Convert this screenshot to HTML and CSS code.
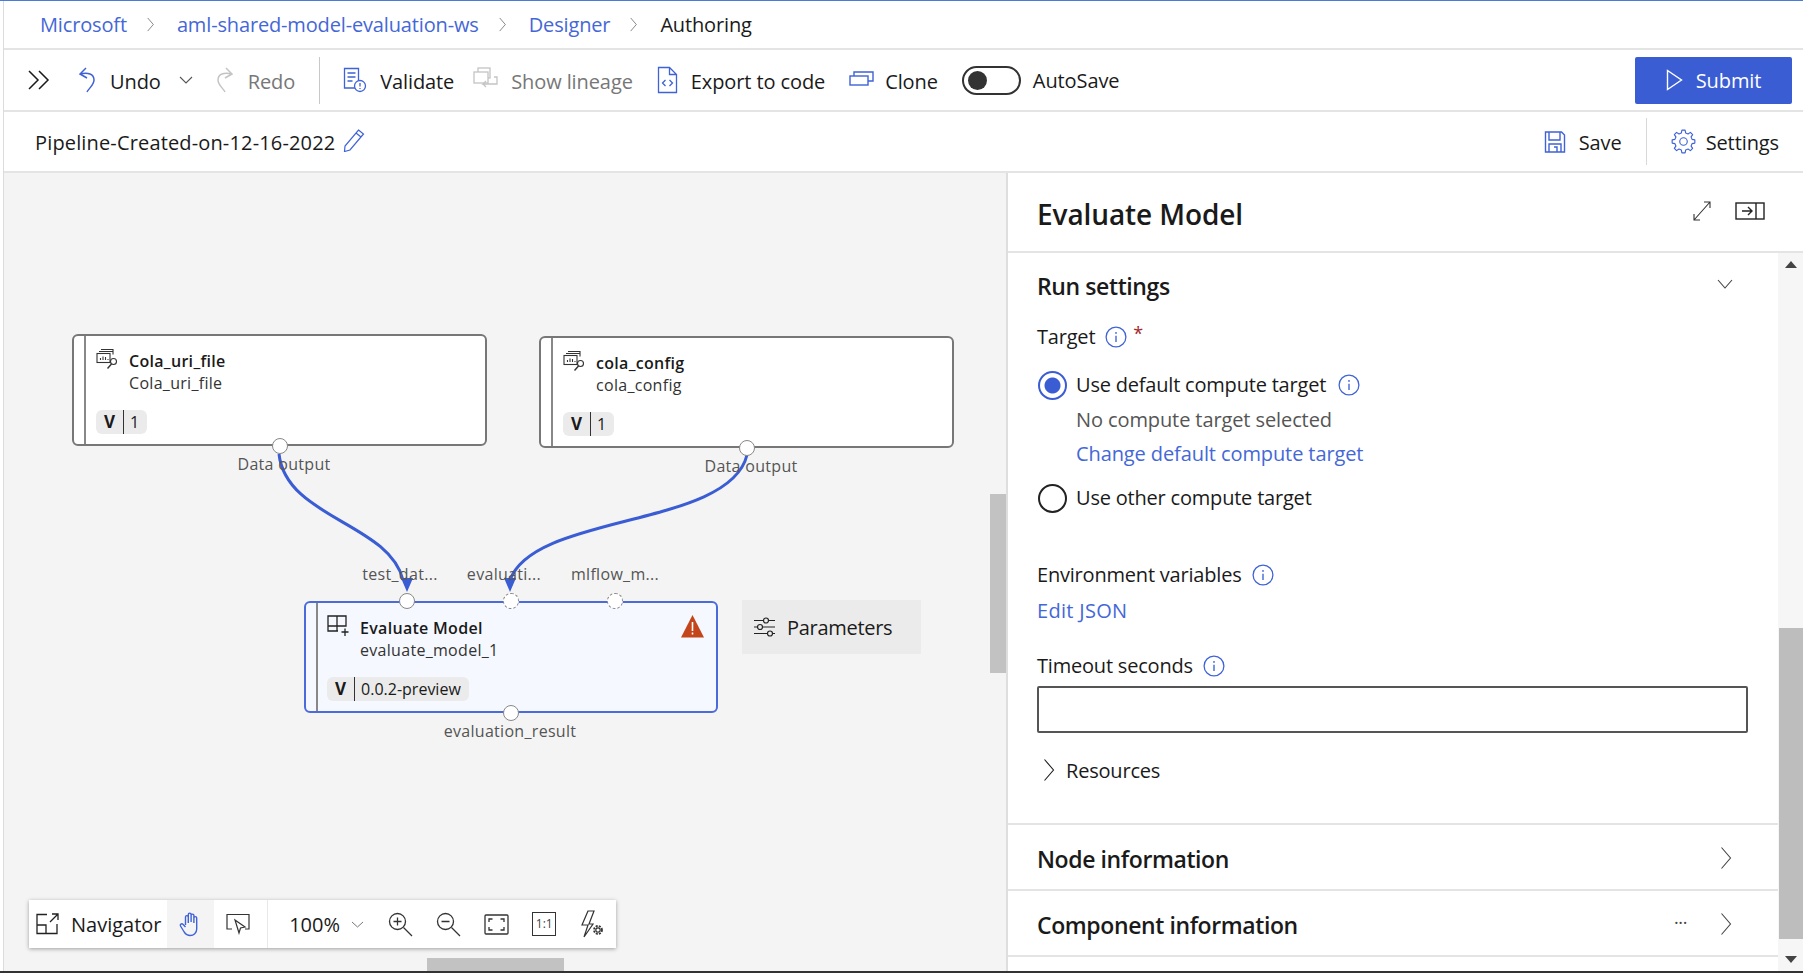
FILE: index.html
```html
<!DOCTYPE html>
<html lang="en">
  <head>
    <meta charset="UTF-8" />
    <title>Authoring - Designer</title>
    <link rel="stylesheet" href="styles.css">
  </head>
  <body>
    <svg class="defs" width="0" height="0">
      <symbol id="info" viewBox="0 0 24 24">
        <circle cx="12" cy="12" r="10.8" fill="none" stroke="currentColor" stroke-width="1.4" />
        <path d="M12 10.5v7" fill="none" stroke="currentColor" stroke-width="1.5" />
        <circle cx="12" cy="7.5" r="1" fill="currentColor" />
      </symbol>
      <symbol id="dataset" viewBox="0 0 22 22">
        <g fill="none" stroke="#333" stroke-width="1.1">
          <path d="M5 1.5h12v2M3 3.5h14v3" />
          <rect x="1" y="5.5" width="13" height="9" fill="#fff" />
          <path d="M4.500 12v-2M7 12V8.500M9.500 12v-3M12 12v-1" />
          <circle cx="17.500" cy="13.500" r="3" />
          <path d="M15.500 16l-4 4.500" stroke-width="1.400" />
        </g>
      </symbol>
      <symbol id="chev-right" viewBox="0 0 12 24">
        <path d="M1.500 1.500L10.500 12L1.500 22.500" fill="none" stroke="currentColor" stroke-width="1.100" />
      </symbol>
    </svg>

    <div class="app">
      <nav class="crumbs">
        <a class="crumb-link">Microsoft</a>
        <svg class="crumb-sep"><use href="#chev-right" /></svg>
        <a class="crumb-link">aml-shared-model-evaluation-ws</a>
        <svg class="crumb-sep"><use href="#chev-right" /></svg>
        <a class="crumb-link">Designer</a>
        <svg class="crumb-sep"><use href="#chev-right" /></svg>
        <span>Authoring</span>
      </nav>

      <div class="toolbar">
        <svg class="expand-icon" width="22" height="22" viewBox="0 0 22 22" fill="none" stroke="#1a1a1a" stroke-width="1.500">
          <path d="M1 2l9 9-9 9M11 2l9 9-9 9" />
        </svg>
        <div class="tool tool-undo">
          <svg width="20" height="28" viewBox="0 0 20 28" fill="none" stroke="#3f62d6" stroke-width="1.500">
            <path d="M9 2L3 8l7 4M3 8c8-2 14 0 14 6 0 5-5 8-7 12" />
          </svg>
          <span>Undo</span>
        </div>
        <svg class="caret" width="14" height="8" viewBox="0 0 14 8" fill="none" stroke="#555" stroke-width="1.100">
          <path d="M1 1l6 6 6-6" />
        </svg>
        <div class="tool tool-off tool-redo">
          <svg width="20" height="28" viewBox="0 0 20 28" fill="none" stroke="#c4c4c4" stroke-width="1.500">
            <path d="M11 2l6 6-7 4M17 8C9 6 3 8 3 14c0 5 5 8 7 12" />
          </svg>
          <span>Redo</span>
        </div>
        <div class="tool-divider"></div>
        <div class="tool">
          <svg width="24" height="26" viewBox="0 0 24 26" fill="none" stroke="#3f62d6" stroke-width="1.300">
            <path d="M13 21H1.500V1.500h14V13" />
            <path d="M4.500 6h8M4.500 10h8M4.500 14h5" />
            <circle cx="17" cy="19" r="5.500" fill="#fff" />
            <path d="M17 16v3.500M17 21v1" />
          </svg>
          <span>Validate</span>
        </div>
        <div class="tool tool-off tool-lineage">
          <svg width="25" height="26" viewBox="0 0 25 26" fill="none" stroke="#c4c4c4" stroke-width="1.300">
            <rect x="5" y="1" width="12" height="10" />
            <rect x="1" y="5" width="14" height="11" fill="#fff" />
            <path d="M21 10h3v7H10l3-3M10 17l3 3" />
          </svg>
          <span>Show lineage</span>
        </div>
        <div class="tool">
          <svg width="21" height="28" viewBox="0 0 21 28" fill="none" stroke="#3f62d6" stroke-width="1.300">
            <path d="M1.500 1.500h11l7 7v18h-18zM12.500 1.500v7h7" />
            <path d="M8.500 14l-3 3 3 3M12.500 14l3 3-3 3" />
          </svg>
          <span>Export to code</span>
        </div>
        <div class="tool tool-clone">
          <svg width="25" height="20" viewBox="0 0 25 20" fill="none" stroke="#3f62d6" stroke-width="1.400">
            <path d="M5 6V2h19v9h-5" />
            <rect x="1" y="6" width="18" height="9" fill="#fff" />
          </svg>
          <span>Clone</span>
        </div>
        <div class="toggle-wrap">
          <div class="toggle"><div class="toggle-knob"></div></div>
          <span>AutoSave</span>
        </div>
        <button class="submit-btn">
          <svg width="17" height="22" viewBox="0 0 17 22" fill="none" stroke="#fff" stroke-width="1.400">
            <path d="M1.500 1.500v19L15.500 11z" />
          </svg>
          Submit
        </button>
      </div>

      <div class="title-bar">
        <span class="pipeline-name">Pipeline-Created-on-12-16-2022</span>
        <svg class="pencil" width="22" height="24" viewBox="0 0 22 24" fill="none" stroke="#3f62d6" stroke-width="1.200">
          <path d="M15.500 2l5 4L7 22l-5.500 1.500L2 18zM13 5l5 4" />
        </svg>
        <div class="title-actions">
          <div class="tool">
            <svg width="22" height="24" viewBox="0 0 22 24" fill="none" stroke="#3f62d6" stroke-width="1.400">
              <path d="M1.500 2h16l3 3v17h-19zM5 2v8h11V2M5 22v-8h12v8M10 17h3v5" />
            </svg>
            <span>Save</span>
          </div>
          <div class="title-divider"></div>
          <div class="tool tool-settings">
            <svg width="25" height="25" viewBox="0 0 24 24" fill="none" stroke="#3f62d6" stroke-width="1.100" stroke-linejoin="round">
              <polygon transform="translate(12 12)" points="1.530,-10.890 2.060,-8.250 4.380,-7.290 6.620,-8.780 8.780,-6.620 7.290,-4.380 8.250,-2.060 10.890,-1.530 10.890,1.530 8.250,2.060 7.290,4.380 8.780,6.620 6.620,8.780 4.380,7.290 2.060,8.250 1.530,10.890 -1.530,10.890 -2.060,8.250 -4.380,7.290 -6.620,8.780 -8.780,6.620 -7.290,4.380 -8.250,2.060 -10.890,1.530 -10.890,-1.530 -8.250,-2.060 -7.290,-4.380 -8.780,-6.620 -6.620,-8.780 -4.380,-7.290 -2.060,-8.250 -1.530,-10.890" />
              <circle cx="12" cy="12" r="3.600" />
            </svg>
            <span>Settings</span>
          </div>
        </div>
      </div>

      <main class="main">
        <section class="canvas">
          <svg class="edges" width="1002" height="798" viewBox="0 0 1002 798" fill="none" stroke="#3a5dd3" stroke-width="3">
            <path d="M275 281C282 345 385 350 399 407" />
            <path d="M743 282C725 355 530 340 506 407" />
            <path d="M403 419l-6-14h12zM506 419l-6-14h12z" fill="#3a5dd3" stroke="none" />
          </svg>

          <div class="node node-cola">
            <div class="node-head">
              <svg class="node-icon" width="22" height="22"><use href="#dataset" /></svg>
              <div>
                <div class="node-title">Cola_uri_file</div>
                <div class="node-sub">Cola_uri_file</div>
              </div>
            </div>
            <div class="version"><b>V</b><span>1</span></div>
            <i class="port port-bottom"></i>
          </div>
          <div class="port-label label-cola">Data output</div>

          <div class="node node-config">
            <div class="node-head">
              <svg class="node-icon" width="22" height="22"><use href="#dataset" /></svg>
              <div>
                <div class="node-title">cola_config</div>
                <div class="node-sub">cola_config</div>
              </div>
            </div>
            <div class="version"><b>V</b><span>1</span></div>
            <i class="port port-bottom"></i>
          </div>
          <div class="port-label label-config">Data output</div>

          <div class="port-label label-test">test_dat...</div>
          <div class="port-label label-eval">evaluati...</div>
          <div class="port-label label-mlflow">mlflow_m...</div>

          <div class="node node-evaluate">
            <i class="port port-top port-a"></i>
            <i class="port port-top port-b port-dashed"></i>
            <i class="port port-top port-c port-dashed"></i>
            <div class="node-head">
              <svg class="node-icon" width="22" height="22" viewBox="0 0 22 22" fill="none" stroke="#222" stroke-width="1.300">
                <path d="M11 16H1V1h18v10H1M10 1v15M14.500 17h7M18 13.500v7.500" />
              </svg>
              <div>
                <div class="node-title">Evaluate Model</div>
                <div class="node-sub">evaluate_model_1</div>
              </div>
              <svg class="warn-icon" width="23" height="23" viewBox="0 0 23 23">
                <path d="M11.500 0L23 22.500H0z" fill="#c4451c" />
                <path d="M11.500 7v9M11.500 17.500v2" stroke="#fff" stroke-width="1.600" />
              </svg>
            </div>
            <div class="version"><b>V</b><span>0.0.2-preview</span></div>
            <i class="port port-bottom"></i>
          </div>
          <div class="port-label label-result">evaluation_result</div>

          <div class="params-box">
            <svg width="23" height="20" viewBox="0 0 23 20" fill="none" stroke="#222" stroke-width="1.200">
              <path d="M1 3.500h9M16 3.500h6M1 10h3M10 10h12M1 16.500h13M20 16.500h2" />
              <circle cx="13" cy="3.500" r="2.500" />
              <circle cx="7" cy="10" r="2.500" />
              <circle cx="17" cy="16.500" r="2.500" />
            </svg>
            <span>Parameters</span>
          </div>

          <div class="navigator">
            <div class="nav-name">
              <svg width="23" height="22" viewBox="0 0 23 22" fill="none" stroke="#222" stroke-width="1.300">
                <path d="M11 1.500H1v19h20V11M1 12h9v8.500M14 9l8-8M16 1h6v6" />
              </svg>
              <span>Navigator</span>
            </div>
            <div class="nav-btn nav-hand">
              <svg width="24" height="26" viewBox="0 0 24 26" fill="none" stroke="#3f62d6" stroke-width="1.400">
                <path d="M7.500 14V6a1.400 1.400 0 0 1 2.800 0v6M10.300 11V3.500a1.400 1.400 0 0 1 2.800 0V11M13.100 11V4.500a1.400 1.400 0 0 1 2.800 0V12M15.900 12V7a1.400 1.400 0 0 1 2.800 0v11c0 4-3 6.500-6.500 6.500-3 0-4.500-1.200-6-3.500l-3.700-6c-.9-1.500 1.200-3 2.400-1.800l2.600 2.800" />
              </svg>
            </div>
            <div class="nav-btn nav-select">
              <svg width="24" height="22" viewBox="0 0 24 22" fill="none" stroke="#333" stroke-width="1.200">
                <path d="M6 16H1V1.500h22V16h-4" />
                <path d="M9 7l10 7-4.500 1-1.500 5z" fill="#fff" />
              </svg>
            </div>
            <div class="nav-zoom">
              <span>100%</span>
              <svg width="13" height="7" viewBox="0 0 13 7" fill="none" stroke="#777" stroke-width="1">
                <path d="M1 1l5.500 5L12 1" />
              </svg>
            </div>
            <div class="nav-btn">
              <svg width="25" height="25" viewBox="0 0 25 25" fill="none" stroke="#333" stroke-width="1.300">
                <circle cx="9.500" cy="9.500" r="8" />
                <path d="M15.500 15.500l8.500 8.500M5.500 9.500h8M9.500 5.500v8" />
              </svg>
            </div>
            <div class="nav-btn">
              <svg width="25" height="25" viewBox="0 0 25 25" fill="none" stroke="#333" stroke-width="1.300">
                <circle cx="9.500" cy="9.500" r="8" />
                <path d="M15.500 15.500l8.500 8.500M5.500 9.500h8" />
              </svg>
            </div>
            <div class="nav-btn">
              <svg width="25" height="21" viewBox="0 0 25 21" fill="none" stroke="#333" stroke-width="1.300">
                <rect x="1" y="1" width="23" height="19" rx="1" />
                <path d="M5 8V5h3.500M20 8V5h-3.500M5 13v3h3.500M20 13v3h-3.500" />
              </svg>
            </div>
            <div class="nav-btn"><span class="one-one">1:1</span></div>
            <div class="nav-btn">
              <svg width="24" height="28" viewBox="0 0 24 28" fill="none" stroke="#333" stroke-width="1.200">
                <path d="M8 1L2 15h6L4 27l9-13H9l5-13z" />
                <circle cx="18" cy="20" r="2.200" />
                <circle cx="18" cy="20" r="4" stroke-dasharray="2 1.200" stroke-width="1.800" />
              </svg>
            </div>
          </div>

          <div class="hscroll-thumb"></div>
          <div class="vscroll-thumb"></div>
        </section>

        <aside class="panel">
          <header class="panel-head">
            <h1>Evaluate Model</h1>
            <svg width="18" height="20" viewBox="0 0 18 20" fill="none" stroke="#333" stroke-width="1.100">
              <path d="M1 19L17 1M11 1h6v6M1 13v6h6" />
            </svg>
            <svg class="dock-icon" width="30" height="18" viewBox="0 0 30 18" fill="none" stroke="#222" stroke-width="1.400">
              <rect x="1" y="1" width="28" height="16" />
              <path d="M21 1v16M7 9h10M13 5l4 4-4 4" />
            </svg>
          </header>

          <div class="panel-body">
            <div class="panel-scroll">
              <div class="section-head section-run">
                <span>Run settings</span>
                <svg width="16" height="10" viewBox="0 0 16 10" fill="none" stroke="#444" stroke-width="1.100">
                  <path d="M1 1l7 8 7-8" />
                </svg>
              </div>
              <div class="section-pad">
                <div class="field-label">Target <svg class="info"><use href="#info" /></svg><span class="req">*</span></div>
                <div class="radio-row radio-first"><i class="radio radio-on"></i>Use default compute target<svg class="info info-tight"><use href="#info" /></svg></div>
                <div class="radio-note">No compute target selected</div>
                <div class="radio-note"><a class="link">Change default compute target</a></div>
                <div class="radio-row radio-second"><i class="radio"></i>Use other compute target</div>
                <div class="field-label label-env">Environment variables <svg class="info"><use href="#info" /></svg></div>
                <div class="field-line"><a class="link link-json">Edit JSON</a></div>
                <div class="field-label label-timeout">Timeout seconds <svg class="info"><use href="#info" /></svg></div>
                <input class="text-input" type="text" />
                <div class="resources">
                  <svg width="14" height="24" viewBox="0 0 12 24"><use href="#chev-right" /></svg>
                  <span>Resources</span>
                </div>
              </div>
              <div class="section-head section-closed">
                <span>Node information</span>
                <svg class="row-chev" width="12" height="24"><use href="#chev-right" /></svg>
              </div>
              <div class="section-head section-closed">
                <span>Component information</span>
                <span class="dots">···</span>
                <svg class="row-chev" width="12" height="24"><use href="#chev-right" /></svg>
              </div>
            </div>
            <div class="scrollbar">
              <i class="arrow-up"></i>
              <div class="scrollbar-thumb"></div>
              <i class="arrow-down"></i>
            </div>
          </div>
        </aside>
      </main>
    </div>
  </body>
</html>
```

FILE: styles.css
```css
:root {
  --blue: #3a5dd3;
  --link: #4467d8;
  --line: #e4e4e4;
  --canvas: #f4f4f4;
  --text: #1a1a1a;
}

* {
  margin: 0;
  padding: 0;
  box-sizing: border-box;
}

html,
body {
  height: 973px;
  overflow: hidden;
}

body {
  font-family: "Open Sans", "Noto Sans", sans-serif;
  color: var(--text);
  background: #fff;
  border-top: 1px solid #4a7bd8;
  border-bottom: 2px solid #333;
}

.defs {
  position: absolute;
}

.app {
  margin-left: 3px;
  height: 100%;
  border-left: 1px solid #dcdcdc;
  display: flex;
  flex-direction: column;
}

.crumbs {
  height: 49px;
  flex: none;
  border-bottom: 2px solid var(--line);
  display: flex;
  align-items: center;
  padding-left: 36px;
  font-size: 20px;
  letter-spacing: -0.15px;
}

.crumb-link {
  color: var(--link);
}

.crumb-sep {
  width: 9px;
  height: 15px;
  margin: 0 22px 0 19px;
  color: #555;
}

.toolbar {
  height: 62px;
  flex: none;
  border-bottom: 2px solid var(--line);
  display: flex;
  align-items: center;
  gap: 24px;
  padding: 0 11px 0 24px;
  font-size: 20px;
  letter-spacing: -0.1px;
}

.tool {
  display: flex;
  align-items: center;
  gap: 13px;
  white-space: nowrap;
}

.tool span {
  padding-top: 2px;
}

.tool-off {
  color: #777;
}

.tool-undo {
  margin-left: 3px;
}

.caret {
  margin-left: -6px;
}

.tool-redo {
  margin-left: -2px;
}

.tool-lineage {
  margin-left: -5px;
}

.tool-clone {
  gap: 11px;
}

.tool-settings {
  gap: 10px;
}

.tool-divider {
  width: 1px;
  height: 47px;
  margin-right: -1px;
  background: #c8c8c8;
}

.toggle-wrap {
  display: flex;
  align-items: center;
  gap: 12px;
}

.toggle {
  width: 59px;
  height: 29px;
  border: 2px solid #333;
  border-radius: 15px;
  padding: 3px 4px;
}

.toggle-knob {
  width: 19px;
  height: 19px;
  border-radius: 50%;
  background: #333;
}

.submit-btn {
  margin-left: auto;
  width: 157px;
  height: 47px;
  background: var(--blue);
  color: #fff;
  border: none;
  border-radius: 2px;
  font: inherit;
  letter-spacing: inherit;
  display: flex;
  align-items: center;
  justify-content: center;
  gap: 13px;
}

.title-bar {
  height: 61px;
  flex: none;
  border-bottom: 2px solid var(--line);
  display: flex;
  align-items: center;
  padding: 0 24px 0 31px;
  font-size: 20px;
  letter-spacing: -0.1px;
}

.pipeline-name {
  font-weight: 500;
  letter-spacing: 0.15px;
  padding-top: 2px;
}

.pencil {
  margin: -3px 0 0 8px;
}

.title-actions {
  margin-left: auto;
  display: flex;
  align-items: center;
  gap: 24px;
}

.title-divider {
  width: 1px;
  height: 47px;
  background: #d8d8d8;
}

.main {
  flex: 1;
  display: flex;
  min-height: 0;
}

.canvas {
  width: 1002px;
  flex: none;
  position: relative;
  background: var(--canvas);
  overflow: hidden;
  letter-spacing: 0.3px;
}

.edges {
  position: absolute;
  left: 0;
  top: 0;
}

.node {
  position: absolute;
  width: 415px;
  height: 112px;
  background: #fff;
  border: 2px solid #777;
  border-radius: 6px;
  padding: 11px 0 0 22px;
}

.node::before {
  content: "";
  position: absolute;
  left: 10px;
  top: 0;
  bottom: 0;
  border-left: 2px solid #888;
}

.node-cola {
  left: 68px;
  top: 161px;
}

.node-config {
  left: 535px;
  top: 163px;
}

.node-evaluate {
  left: 300px;
  top: 428px;
  width: 414px;
  padding-left: 21px;
  background: #f5f8fe;
  border-color: #4a6bd9;
}

.node-head {
  display: flex;
  align-items: flex-start;
  gap: 11px;
  height: 63px;
  position: relative;
}

.node-icon {
  flex: none;
  margin-top: 1px;
}

.node-title {
  font-size: 16px;
  font-weight: 600;
  line-height: 24px;
  margin-top: 2px;
}

.node-sub {
  font-size: 16px;
  line-height: 21px;
  color: #333;
}

.warn-icon {
  position: absolute;
  right: 12px;
  top: 1px;
}

.version {
  display: inline-flex;
  align-items: center;
  height: 24px;
  background: #ebebeb;
  border-radius: 6px;
  font-size: 16px;
  line-height: 24px;
  letter-spacing: 0;
}

.version b {
  padding: 0 8px;
  font-size: 17px;
  border-right: 1.500px solid #333;
}

.version span {
  padding: 0 8px 0 6px;
}

.port {
  position: absolute;
  width: 16px;
  height: 16px;
  border-radius: 50%;
  background: #fff;
  border: 1.500px solid #888;
}

.port-bottom {
  left: 50%;
  bottom: -10px;
  margin-left: -8px;
}

.port-top {
  top: -10px;
}

.port-a {
  left: 93px;
}

.port-b {
  left: 197px;
}

.port-c {
  left: 301px;
}

.port-dashed {
  border-style: dashed;
}

.port-label {
  position: absolute;
  font-size: 16px;
  line-height: 20px;
  color: #555;
  white-space: nowrap;
  transform: translateX(-50%);
}

.label-cola {
  left: 280px;
  top: 281px;
}

.label-config {
  left: 747px;
  top: 283px;
}

.label-test {
  left: 396px;
  top: 391px;
}

.label-eval {
  left: 500px;
  top: 391px;
}

.label-mlflow {
  left: 611px;
  top: 391px;
}

.label-result {
  left: 506px;
  top: 548px;
}

.params-box {
  position: absolute;
  left: 738px;
  top: 427px;
  width: 179px;
  height: 54px;
  background: #ebebeb;
  display: flex;
  align-items: center;
  gap: 11px;
  padding-left: 11px;
  font-size: 20px;
  font-weight: 500;
  letter-spacing: -0.3px;
}

.navigator {
  position: absolute;
  left: 25px;
  top: 727px;
  width: 587px;
  height: 48px;
  background: #fff;
  box-shadow: 0 1px 4px rgba(0, 0, 0, 0.35);
  display: flex;
  align-items: center;
  font-size: 20px;
  letter-spacing: 0;
}

.nav-name {
  width: 138px;
  padding-left: 7px;
  display: flex;
  align-items: center;
  gap: 12px;
}

.nav-btn {
  width: 48px;
  height: 48px;
  display: flex;
  align-items: center;
  justify-content: center;
}

.nav-hand {
  background: #f4f4f4;
}

.nav-select {
  width: 54px;
  padding-right: 6px;
  border-right: 1px solid #e8e8e8;
}

.nav-zoom {
  width: 109px;
  padding-left: 21px;
  display: flex;
  align-items: center;
  gap: 11px;
}

.one-one {
  width: 24px;
  height: 24px;
  border: 1px solid #333;
  font-size: 12px;
  line-height: 22px;
  text-align: center;
  letter-spacing: 0;
  color: #444;
}

.hscroll-thumb {
  position: absolute;
  left: 423px;
  bottom: 0;
  width: 137px;
  height: 13px;
  background: #c2c2c2;
}

.vscroll-thumb {
  position: absolute;
  right: 0;
  top: 321px;
  width: 16px;
  height: 179px;
  background: #c2c2c2;
}

.panel {
  flex: 1;
  border-left: 2px solid #dedede;
  display: flex;
  flex-direction: column;
  min-width: 0;
}

.panel-head {
  height: 80px;
  flex: none;
  display: flex;
  align-items: center;
  padding: 0 38px 0 29px;
  border-bottom: 2px solid var(--line);
  gap: 24px;
}

.panel-head h1 {
  flex: 1;
  font-size: 28px;
  font-weight: 600;
  letter-spacing: -0.1px;
  margin-top: 4px;
}

.panel-head svg {
  margin-top: -2px;
}

.panel-body {
  flex: 1;
  display: flex;
  min-height: 0;
}

.panel-scroll {
  flex: 1;
  min-width: 0;
  font-size: 20px;
  letter-spacing: -0.2px;
}

.section-head {
  display: flex;
  align-items: center;
  padding: 0 46px 0 29px;
  font-size: 23px;
  font-weight: 600;
  letter-spacing: -0.4px;
}

.section-head > span:first-child {
  flex: 1;
}

.section-run {
  height: 66px;
}

.section-run svg {
  margin: -4px -1px 0 0;
}

.section-closed {
  height: 66px;
  padding-top: 3px;
  border-bottom: 2px solid var(--line);
}

.row-chev {
  color: #444;
  margin-top: -2px;
}

.dots {
  margin: -6px 33px 0 0;
  font-size: 18px;
  font-weight: 400;
  color: #444;
}

.section-pad {
  padding: 0 29px;
  height: 506px;
  border-bottom: 2px solid var(--line);
}

.field-label,
.radio-row,
.radio-note,
.field-line {
  height: 36px;
  line-height: 36px;
  display: flex;
  align-items: center;
}

.radio-note {
  height: 34px;
  padding-left: 39px;
  color: #555;
  letter-spacing: -0.1px;
}

.info {
  width: 22px;
  height: 22px;
  margin-left: 10px;
  color: #3f62d6;
  flex: none;
}

.info-tight {
  margin-left: 3px;
}

.req {
  color: #a4262c;
  margin: -8px 0 0 6px;
  font-size: 18px;
}

.link {
  color: var(--link);
}

.link-json {
  letter-spacing: 0.3px;
}

.radio-row {
  gap: 9px;
  margin-left: 1px;
}

.radio-first {
  margin-top: 12px;
}

.radio-second {
  margin-top: 9px;
}

.radio {
  width: 29px;
  height: 29px;
  border-radius: 50%;
  border: 2px solid #222;
  flex: none;
}

.radio-on {
  border-color: var(--blue);
  background: radial-gradient(circle, var(--blue) 0 7.500px, #fff 8.500px);
}

.label-env {
  margin-top: 41px;
}

.label-timeout {
  margin-top: 19px;
}

.text-input {
  display: block;
  width: 711px;
  height: 47px;
  margin-top: 2px;
  border: 2px solid #555;
  border-radius: 2px;
  background: #fff;
}

.resources {
  display: flex;
  align-items: center;
  gap: 10px;
  margin: 18px 0 0 5px;
  height: 38px;
}

.scrollbar {
  width: 25px;
  flex: none;
  background: #f6f6f6;
  position: relative;
}

.scrollbar-thumb {
  position: absolute;
  left: 1px;
  right: 0;
  top: 375px;
  height: 311px;
  background: #bdbdbd;
}

.arrow-up,
.arrow-down {
  position: absolute;
  left: 7px;
  border-left: 6px solid transparent;
  border-right: 6px solid transparent;
}

.arrow-up {
  top: 8px;
  border-bottom: 7px solid #444;
}

.arrow-down {
  bottom: 8px;
  border-top: 7px solid #444;
}
```
